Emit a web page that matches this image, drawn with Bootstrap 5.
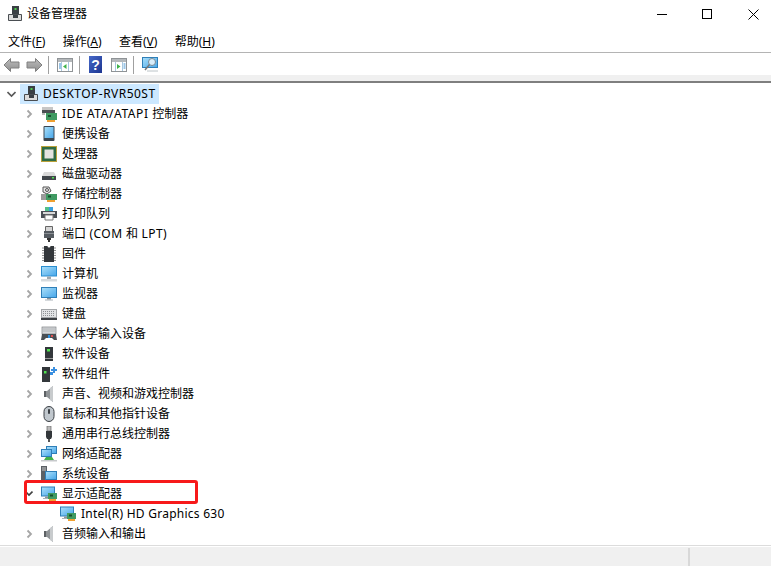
<!DOCTYPE html>
<html lang="zh-CN">
<head>
<meta charset="utf-8">
<title>设备管理器</title>
<link href="https://cdn.jsdelivr.net/npm/bootstrap@5.3.0/dist/css/bootstrap.min.css" rel="stylesheet">
<style>
html,body{height:100%;overflow:hidden;background:#fff}
body{font-family:"Noto Sans","Noto Sans CJK SC",sans-serif;font-size:12px;line-height:20px;color:#000}
.app{width:771px;height:566px;position:relative;overflow:hidden}
.tbar{height:27px;padding:1px 0 0 7px}
.ttl{margin-left:4px}
.wbtns{margin-left:auto;margin-right:-5px}
.wbtn{width:45px;display:flex;justify-content:center;align-items:center;height:26px}
.wbtn:last-child{width:46px}
.mbar{height:26px;border-bottom:1px solid #b4b4b4;padding:5px 0 0 8px;gap:17.3px}
.tools{height:22px;padding:1px 0 0 3px}
.tools svg{flex:none}
.tfwd{margin-left:6px}
.tsep{width:1px;height:18px;background:#a0a0a0;margin:0 8px 0 6px}
.tsep-a{margin-left:5px}
.thelp{margin-left:1px;margin-right:9px}
.band{height:8px;background:#f0f0f0;border-bottom:2px solid #7f7f7f}
.tree{height:462px;overflow:hidden;padding-top:1px}
.trow{height:20px;white-space:nowrap}
.chev{width:8px;height:10px;margin-left:25px;margin-right:8px;flex:none}
.ico{width:16px;height:16px;margin-right:5px;flex:none}
.tbar .ico{margin-right:0}
.rootrow .chev{margin-left:7px;margin-right:0;width:9px}
.hl{background:#cce8ff;height:20px;margin-left:4px;padding:0 2px 0 3px;width:139px}
.hl .ico{margin-right:4px}
.childrow{padding-left:60px}
.ls-root{letter-spacing:.47px}
.ls-ide{letter-spacing:.58px}
.ls-port{letter-spacing:.42px}
.ls-intel{letter-spacing:.25px}
.sbar{height:21px;background:#f0f0f0;border-top:1px solid #dcdcdc;box-shadow:inset 0 1px 0 #fff}
.scell{border-left:2px solid #d8d8d8;margin-left:688px;height:19px;margin-top:2px}
.redbox{position:absolute;left:24px;top:480px;width:174px;height:24px;border:3px solid #f7191a;border-radius:3px}
</style>
</head>
<body>
<svg width="0" height="0" class="position-absolute">
<defs>
<linearGradient id="scr" x1="0" y1="0" x2="1" y2="1"><stop offset="0" stop-color="#a8def9"/><stop offset="1" stop-color="#4aa8ea"/></linearGradient>
<linearGradient id="grayg" x1="0" y1="0" x2="0" y2="1"><stop offset="0" stop-color="#bdbdbd"/><stop offset="1" stop-color="#8f8f8f"/></linearGradient>
<linearGradient id="helpg" x1="0" y1="0" x2="1" y2="1"><stop offset="0" stop-color="#4668c8"/><stop offset="1" stop-color="#1c3590"/></linearGradient>
<symbol id="chev" viewBox="0 0 8 10"><path d="M2.500 1.500 6 5 2.500 8.500" fill="none" stroke="#a6a6a6" stroke-width="1.800"/></symbol>
<symbol id="pc" viewBox="0 0 16 16"><rect x="5" y="0" width="7" height="9" fill="#3a3f44"/><rect x="7.500" y="2" width="2" height="2" fill="#4fd04f"/><path d="M1.500 8.500h13v6h-13z" fill="#dcdcdc" stroke="#4a4e52"/><path d="M6 9h5v3H6z" fill="#3a3f44"/></symbol>
<symbol id="ide" viewBox="0 0 16 16"><path d="M1 1h11v3H1z" fill="#c7c7c7"/><path d="M1 4h13v3H1z" fill="#4b4f53"/><path d="M1 7h3v2H1z" fill="#bbb"/><path d="M5 7h11v7H5z" fill="#3f9a62"/><path d="M7 9h3v2H7z" fill="#174f2d"/><path d="M6 14h8v2H6z" fill="#f0a030"/></symbol>
<symbol id="port" viewBox="0 0 16 16"><rect x="2.500" y="0" width="11" height="15" rx="1" fill="#3c4752"/><rect x="3.500" y="1" width="9" height="11" fill="url(#scr)"/></symbol>
<symbol id="cpu" viewBox="0 0 16 16"><rect x="0" y="0" width="16" height="16" fill="#b9a13a"/><rect x="1" y="1" width="14" height="14" fill="#2f6b45"/><rect x="3.500" y="3.500" width="9" height="9" fill="#e4e4e0"/></symbol>
<symbol id="disk" viewBox="0 0 16 16"><path d="M3 6h10l2 4H1z" fill="#d9d9d9"/><rect x="1" y="10" width="14" height="4" fill="#41464b"/><rect x="11" y="11" width="2" height="1.500" fill="#4fe04f"/></symbol>
<symbol id="stor" viewBox="0 0 16 16"><path d="M2 1h6l2 4-4 3-4-2z" fill="#e8e8e8" stroke="#555"/><circle cx="6" cy="4" r="1.500" fill="none" stroke="#555"/><path d="M0 8h6v6H0z" fill="#9a9a9a"/><path d="M5 8h11v6H5z" fill="#3f9a62"/><path d="M7 9.500h3v2H7z" fill="#174f2d"/><path d="M6 14h8v2H6z" fill="#f0a030"/></symbol>
<symbol id="prn" viewBox="0 0 16 16"><path d="M4 1h8v4H4z" fill="#3aa0e0"/><path d="M4 1h4v4H4z" fill="#54c08a"/><path d="M0 5h16v7H0z" fill="#4c5157"/><path d="M2 6h12v2H2z" fill="#d9d9d9"/><path d="M4 9h8v5H4z" fill="#fff" stroke="#777"/></symbol>
<symbol id="com" viewBox="0 0 16 16"><path d="M4.500.500h7v5h-7z" fill="#d5d5d5" stroke="#666"/><path d="M3 5h10v7H3z" fill="#555b61"/><path d="M3 7h10v1H3z" fill="#8a8f94"/><path d="M6 12h4v2H6zM7 14h2v2H7z" fill="#333"/></symbol>
<symbol id="fw" viewBox="0 0 16 16"><path d="M3 0h3.500a1.500 1.500 0 0 0 3 0H13v16H3z" fill="#33373b"/><path d="M1 2h2M1 4.500h2M1 7h2M1 9.500h2M1 12h2M1 14.500h2M13 2h2M13 4.500h2M13 7h2M13 9.500h2M13 12h2M13 14.500h2" stroke="#8d8d8d"/></symbol>
<symbol id="comp" viewBox="0 0 16 16"><rect x="0" y="0" width="16" height="10.500" fill="#2a8ed0"/><rect x="1" y="1" width="14" height="8.500" fill="url(#scr)"/><path d="M6 10.500h4V13H6z" fill="#a0a8ae"/><path d="M0 13h16v2.500H0z" fill="#d6dadd"/></symbol>
<symbol id="mon" viewBox="0 0 16 16"><rect x="0" y="1" width="16" height="11" fill="#2f7fb8"/><rect x="1" y="2" width="14" height="9" fill="url(#scr)"/><path d="M6 12h4v1.500H6z" fill="#8a949b"/><path d="M4 13.500h8v1H4z" fill="#aab2b8"/></symbol>
<symbol id="kbd" viewBox="0 0 16 16"><rect x="0.500" y="3.500" width="15" height="8" fill="#e2e4e6" stroke="#a4a7aa"/><path d="M2 5.500h12M2 7.500h12M2 9.500h12" stroke="#8d9094" stroke-dasharray="1 1"/><path d="M0 12h16v2H0z" fill="#3b3f43"/></symbol>
<symbol id="hid" viewBox="0 0 16 16"><rect x="1" y="1" width="14" height="7" fill="#d6d8da" stroke="#7d8084" stroke-width=".7"/><path d="M2.500 3h11M2.500 5h11" stroke="#8d9094" stroke-dasharray="1 1"/><path d="M1 8h14l1 6h-3l-2-2H5l-2 2H0z" fill="#4a4f54"/><path d="M7 9h2v3H7z" fill="#2d8fe0"/><path d="M10 9h2v2h-2z" fill="#e05050"/></symbol>
<symbol id="sw" viewBox="0 0 16 16"><rect x="4" y="1" width="8" height="14" fill="#33373b"/><rect x="6" y="3" width="3" height="2.500" fill="#4fe04f"/><path d="M4 12.500h8" stroke="#999"/></symbol>
<symbol id="swc" viewBox="0 0 16 16"><rect x="1" y="1" width="8" height="15" fill="#33373b"/><rect x="3" y="5" width="2.500" height="2.500" fill="#4fe04f"/><path d="M10 3h2V1h2v2h2v2h-2v2h-2V5h-2z" fill="#3a8fe0"/><path d="M9 6h3v3H9z" fill="#3a8fe0"/></symbol>
<symbol id="spk" viewBox="0 0 16 16"><path d="M3 5h3l6-5v16l-6-5H3z" fill="#8f9396"/><path d="M9 2l3-2v16l-3-2z" fill="#c8cbcd"/><path d="M3 5h2v6H3z" fill="#5d6164"/></symbol>
<symbol id="mouse" viewBox="0 0 16 16"><rect x="3" y="0.500" width="10" height="15" rx="5" fill="#c0c7cd" stroke="#3a3f44"/><rect x="7" y="3" width="2" height="5" rx="1" fill="#3a3f44"/></symbol>
<symbol id="usb" viewBox="0 0 16 16"><path d="M6 0h4v5H6z" fill="#bcbcbc" stroke="#666" stroke-width=".7"/><path d="M5 5h6v6l-1 2H6l-1-2z" fill="#33373b"/><path d="M7 13h2v3H7z" fill="#555"/></symbol>
<symbol id="net" viewBox="0 0 16 16"><rect x="5" y="0" width="11" height="8" fill="#2f7fb8"/><rect x="6" y="1" width="9" height="6" fill="url(#scr)"/><rect x="0" y="3" width="11" height="8" fill="#2f7fb8"/><rect x="1" y="4" width="9" height="6" fill="url(#scr)"/><path d="M0 14h16v1.500H0z" fill="#c6c9cb"/><path d="M5 11h6l2 3H3z" fill="#43b04a"/></symbol>
<symbol id="sys" viewBox="0 0 16 16"><rect x="0" y="0" width="6" height="14" fill="#5b6065"/><path d="M1 2h4M1 4h4" stroke="#c8c8c8"/><rect x="4" y="5" width="12" height="9" fill="#2f7fb8"/><rect x="5" y="6" width="10" height="7" fill="url(#scr)"/><path d="M4 14h12v2H4z" fill="#c6c9cb"/></symbol>
<symbol id="dsp" viewBox="0 0 16 16"><rect x="0" y="0.500" width="14" height="10" fill="#2f7fb8"/><rect x="1" y="1.500" width="12" height="8" fill="url(#scr)"/><path d="M4 10.500h4v1.500H4z" fill="#8a949b"/><path d="M2 12h8v1H2z" fill="#aab2b8"/><path d="M7 7h9v6H7z" fill="#3f9a62"/><path d="M9 8.500h3v2H9z" fill="#174f2d"/><path d="M8 13h7v2H8z" fill="#f0a030"/></symbol>
<symbol id="back" viewBox="0 0 17 16"><path d="M1 8l6.500-6.500V5H16v6H7.500v3.500z" fill="url(#grayg)" stroke="#808080"/></symbol>
</defs>
</svg>
<div class="app">
  <div class="tbar d-flex align-items-center">
    <svg class="ico"><use href="#pc"/></svg>
    <span class="ttl">设备管理器</span>
    <div class="wbtns d-flex">
      <div class="wbtn"><svg width="11" height="11" viewBox="0 0 11 11"><path d="M0 5.500h10" stroke="#000"/></svg></div>
      <div class="wbtn"><svg width="11" height="11" viewBox="0 0 11 11"><rect x=".5" y=".5" width="9" height="9" fill="none" stroke="#000"/></svg></div>
      <div class="wbtn"><svg width="11" height="11" viewBox="0 0 11 11"><path d="M.5.500l10 10M10.500.500l-10 10" stroke="#000"/></svg></div>
    </div>
  </div>
  <div class="mbar d-flex align-items-center">
    <span>文件(<u>F</u>)</span><span>操作(<u>A</u>)</span><span>查看(<u>V</u>)</span><span>帮助(<u>H</u>)</span>
  </div>
  <div class="tools d-flex align-items-center">
    <svg width="17" height="16"><use href="#back"/></svg>
    <svg width="17" height="16" class="tfwd" style="transform:scaleX(-1)"><use href="#back"/></svg>
    <div class="tsep tsep-a"></div>
    <svg width="16" height="14" viewBox="0 0 16 14"><rect x=".5" y=".5" width="15" height="13" fill="#fff" stroke="#8f9396"/><path d="M1 1h14v3H1z" fill="#b4b8bb"/><path d="M4.500 4v9M11.500 4v9" stroke="#a8c8e0"/><path d="M2 6h2M2 8h2M2 10h2" stroke="#3b8ed0"/><path d="M9.500 6v5L6 8.500z" fill="#3fb24a"/></svg>
    <div class="tsep"></div>
    <svg width="13" height="17" viewBox="0 0 13 17" class="thelp"><rect width="13" height="17" fill="url(#helpg)"/><text x="6.500" y="13.500" fill="#fff" font-size="14" font-weight="700" text-anchor="middle" font-family="Liberation Sans">?</text></svg>
    <svg width="16" height="14" viewBox="0 0 16 14"><rect x=".5" y=".5" width="15" height="13" fill="#fff" stroke="#8f9396"/><path d="M1 1h14v3H1z" fill="#b4b8bb"/><path d="M4.500 4v9M11.500 4v9" stroke="#a8c8e0"/><path d="M12.500 6h2M12.500 8h2M12.500 10h2" stroke="#3b8ed0"/><path d="M6 6v5l3.500-2.500z" fill="#3fb24a"/></svg>
    <div class="tsep"></div>
    <svg width="17" height="17" viewBox="0 0 17 17"><rect x=".5" y="1.500" width="15" height="10" fill="url(#scr)" stroke="#2f7fb8"/><circle cx="10" cy="6" r="3.500" fill="#d9eefb" stroke="#7a8a95"/><path d="M7.500 8.500 3 14" stroke="#777" stroke-width="1.500"/><path d="M5 15h11" stroke="#bcc4c8"/></svg>
  </div>
  <div class="band"></div>
  <div class="tree">
    <div class="trow rootrow d-flex align-items-center">
      <svg class="chev" viewBox="0 0 9 10"><path d="M.5 3 4.500 7 8.500 3" fill="none" stroke="#595959" stroke-width="1.600"/></svg>
      <div class="hl d-flex align-items-center"><svg class="ico"><use href="#pc"/></svg><span class="ls-root">DESKTOP-RVR50ST</span></div>
    </div>
    <div class="trow d-flex align-items-center"><svg class="chev"><use href="#chev"/></svg><svg class="ico"><use href="#ide"/></svg><span><span class="ls-ide">IDE ATA/ATAPI </span>控制器</span></div>
    <div class="trow d-flex align-items-center"><svg class="chev"><use href="#chev"/></svg><svg class="ico"><use href="#port"/></svg><span>便携设备</span></div>
    <div class="trow d-flex align-items-center"><svg class="chev"><use href="#chev"/></svg><svg class="ico"><use href="#cpu"/></svg><span>处理器</span></div>
    <div class="trow d-flex align-items-center"><svg class="chev"><use href="#chev"/></svg><svg class="ico"><use href="#disk"/></svg><span>磁盘驱动器</span></div>
    <div class="trow d-flex align-items-center"><svg class="chev"><use href="#chev"/></svg><svg class="ico"><use href="#stor"/></svg><span>存储控制器</span></div>
    <div class="trow d-flex align-items-center"><svg class="chev"><use href="#chev"/></svg><svg class="ico"><use href="#prn"/></svg><span>打印队列</span></div>
    <div class="trow d-flex align-items-center"><svg class="chev"><use href="#chev"/></svg><svg class="ico"><use href="#com"/></svg><span>端口<span class="ls-port"> (COM </span>和<span class="ls-port"> LPT)</span></span></div>
    <div class="trow d-flex align-items-center"><svg class="chev"><use href="#chev"/></svg><svg class="ico"><use href="#fw"/></svg><span>固件</span></div>
    <div class="trow d-flex align-items-center"><svg class="chev"><use href="#chev"/></svg><svg class="ico"><use href="#comp"/></svg><span>计算机</span></div>
    <div class="trow d-flex align-items-center"><svg class="chev"><use href="#chev"/></svg><svg class="ico"><use href="#mon"/></svg><span>监视器</span></div>
    <div class="trow d-flex align-items-center"><svg class="chev"><use href="#chev"/></svg><svg class="ico"><use href="#kbd"/></svg><span>键盘</span></div>
    <div class="trow d-flex align-items-center"><svg class="chev"><use href="#chev"/></svg><svg class="ico"><use href="#hid"/></svg><span>人体学输入设备</span></div>
    <div class="trow d-flex align-items-center"><svg class="chev"><use href="#chev"/></svg><svg class="ico"><use href="#sw"/></svg><span>软件设备</span></div>
    <div class="trow d-flex align-items-center"><svg class="chev"><use href="#chev"/></svg><svg class="ico"><use href="#swc"/></svg><span>软件组件</span></div>
    <div class="trow d-flex align-items-center"><svg class="chev"><use href="#chev"/></svg><svg class="ico"><use href="#spk"/></svg><span>声音、视频和游戏控制器</span></div>
    <div class="trow d-flex align-items-center"><svg class="chev"><use href="#chev"/></svg><svg class="ico"><use href="#mouse"/></svg><span>鼠标和其他指针设备</span></div>
    <div class="trow d-flex align-items-center"><svg class="chev"><use href="#chev"/></svg><svg class="ico"><use href="#usb"/></svg><span>通用串行总线控制器</span></div>
    <div class="trow d-flex align-items-center"><svg class="chev"><use href="#chev"/></svg><svg class="ico"><use href="#net"/></svg><span>网络适配器</span></div>
    <div class="trow d-flex align-items-center"><svg class="chev"><use href="#chev"/></svg><svg class="ico"><use href="#sys"/></svg><span>系统设备</span></div>
    <div class="trow d-flex align-items-center"><svg class="chev" viewBox="0 0 8 10"><path d="M1.500 3.500 4 6 7.500 2.500" fill="none" stroke="#404040" stroke-width="1.600"/></svg><svg class="ico"><use href="#dsp"/></svg><span>显示适配器</span></div>
    <div class="trow childrow d-flex align-items-center"><svg class="ico"><use href="#dsp"/></svg><span class="ls-intel">Intel(R) HD Graphics 630</span></div>
    <div class="trow d-flex align-items-center"><svg class="chev"><use href="#chev"/></svg><svg class="ico"><use href="#spk"/></svg><span>音频输入和输出</span></div>
  </div>
  <div class="sbar"><div class="scell"></div></div>
  <div class="redbox"></div>
</div>
<script src="https://cdn.jsdelivr.net/npm/bootstrap@5.3.0/dist/js/bootstrap.bundle.min.js"></script>
</body>
</html>
